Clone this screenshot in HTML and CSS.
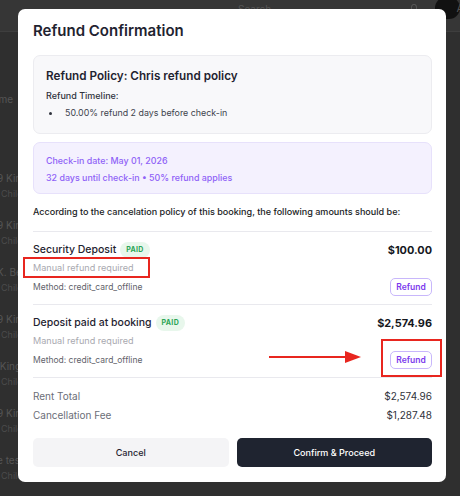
FILE: index.html
```html
<!DOCTYPE html>
<html>
<head>
<meta charset="utf-8">
<link rel="stylesheet" href="styles.css">
</head>
<body>
<div class="page">
  <div class="topbar">
    <span class="search">Search</span>
    <span class="topicon"></span>
    <span class="avatar"><span class="avatar-letter">A</span></span>
  </div>
  <div class="sidelist">
    <div class="side-home">Home</div>
    <div class="side-item"><div>9 King</div><div class="sub">Child</div></div>
    <div class="side-item"><div>9 King</div><div class="sub">Child</div></div>
    <div class="side-item"><div>K. Be</div><div class="sub">Child</div></div>
    <div class="side-item"><div>9 King</div><div class="sub">Child</div></div>
    <div class="side-item"><div>&nbsp;King</div><div class="sub">Child</div></div>
    <div class="side-item"><div>9 King</div><div class="sub">Child</div></div>
    <div class="side-item"><div>e tes</div><div class="sub">Child</div></div>
  </div>
</div>

<div class="modal">
  <h1 class="title">Refund Confirmation</h1>

  <div class="policy">
    <div class="policy-title">Refund Policy: Chris refund policy</div>
    <div class="policy-label">Refund Timeline:</div>
    <ul class="policy-list">
      <li>50.00% refund 2 days before check-in</li>
    </ul>
  </div>

  <div class="checkin">
    <div>Check-in date: May 01, 2026</div>
    <div>32 days until check-in • 50% refund applies</div>
  </div>

  <p class="intro">According to the cancelation policy of this booking, the following amounts should be:</p>

  <div class="item">
    <div class="item-left">
      <div class="item-title">Security Deposit <span class="badge">PAID</span></div>
      <div class="item-note">Manual refund required</div>
      <div class="item-method">Method: credit_card_offline</div>
    </div>
    <div class="item-right">
      <div class="amount">$100.00</div>
      <button class="refund-btn">Refund</button>
    </div>
  </div>

  <div class="item">
    <div class="item-left">
      <div class="item-title">Deposit paid at booking <span class="badge">PAID</span></div>
      <div class="item-note">Manual refund required</div>
      <div class="item-method">Method: credit_card_offline</div>
    </div>
    <div class="item-right">
      <div class="amount">$2,574.96</div>
      <button class="refund-btn">Refund</button>
    </div>
  </div>

  <div class="summary">
    <div class="sum-row"><span>Rent Total</span><span class="sum-val">$2,574.96</span></div>
    <div class="sum-row"><span>Cancellation Fee</span><span class="sum-val">$1,287.48</span></div>
  </div>

  <div class="actions">
    <button class="btn btn-cancel">Cancel</button>
    <button class="btn btn-confirm">Confirm &amp; Proceed</button>
  </div>
</div>

<div class="mark mark-note"></div>
<div class="mark mark-btn"></div>
<svg class="arrow" width="96" height="16" viewBox="0 0 96 16">
  <line x1="0" y1="8" x2="78" y2="8" stroke="#e8261f" stroke-width="2"/>
  <polygon points="76,2 92,8 76,14" fill="#e8261f"/>
</svg>
</body>
</html>
```

FILE: styles.css
```css
* { box-sizing: border-box; }
html, body {
  margin: 0;
  padding: 0;
}
body {
  width: 460px;
  height: 496px;
  overflow: hidden;
  background: #2f2f2f;
  font-family: "Inter", "Noto Sans", sans-serif;
  color: #1f2330;
  position: relative;
}

/* background page (dimmed) */
.page {
  width: 460px;
  height: 496px;
}
.topbar {
  height: 32px;
  background: #363636;
  border-bottom: 1px solid #3e3e3e;
  display: flex;
  align-items: flex-start;
  padding-left: 238px;
}
.search {
  font-size: 10px;
  color: #555;
  margin-top: 3px;
}
.topicon {
  width: 8px;
  height: 8px;
  border: 1px solid #555;
  border-radius: 50%;
  margin-left: 140px;
  margin-top: 4px;
}
.avatar {
  width: 44px;
  height: 22px;
  background: #111;
  border-radius: 11px;
  margin-left: 18px;
  margin-top: -3px;
  display: flex;
  justify-content: flex-end;
  align-items: center;
}
.avatar-letter {
  font-size: 11px;
  color: #555;
  margin-right: -4px;
}
.sidelist {
  margin-left: -3px;
  color: #555;
  font-size: 10px;
}
.side-home {
  margin-top: 61px;
  margin-left: -12px;
}
.side-item {
  margin-top: 66px;
  line-height: 15px;
}
.side-item + .side-item {
  margin-top: 17px;
}
.side-item .sub {
  font-size: 9px;
  padding-left: 4px;
  color: #4c4c4c;
}

/* modal */
.modal {
  position: absolute;
  left: 18px;
  top: 9px;
  width: 428px;
  height: 473px;
  background: #fff;
  border-radius: 7px;
  padding: 10px 14px 15px 15px;
  display: flex;
  flex-direction: column;
}
.title {
  margin: 0;
  font-size: 15px;
  line-height: 24px;
  font-weight: 600;
  color: #1f2330;
}

.policy {
  margin-top: 12px;
  background: #f8f8fa;
  border: 1px solid #ececf0;
  border-radius: 7px;
  padding: 10px 12px 12px 12px;
}
.policy-title {
  font-size: 11.7px;
  line-height: 20px;
  font-weight: 600;
  color: #1f2330;
}
.policy-label {
  margin-top: 2px;
  font-size: 9px;
  line-height: 16px;
  font-weight: 500;
  color: #30333d;
}
.policy-list {
  list-style: none;
  margin: 1px 0 0 0;
  padding: 0 0 0 19px;
  font-size: 8.9px;
  line-height: 16px;
  color: #40434d;
}
.policy-list li {
  position: relative;
}
.policy-list li::before {
  content: "";
  position: absolute;
  left: -16px;
  top: 7px;
  width: 3px;
  height: 3px;
  border-radius: 50%;
  background: #30333d;
}

.checkin {
  margin-top: 8px;
  background: #f4f1fe;
  border: 1px solid #e7e1fb;
  border-radius: 7px;
  padding: 10px 12px 7px 12px;
  display: flex;
  flex-direction: column;
  gap: 1px;
  font-size: 8.9px;
  line-height: 16px;
  font-weight: 500;
  color: #8f62f7;
}

.intro {
  margin: 10px 0 11px 0;
  font-size: 9.05px;
  line-height: 16px;
  font-weight: 500;
  color: #1a1c24;
}

.item {
  border-top: 1px solid #e9e9ee;
  padding: 9px 0 9px 0;
  display: flex;
  justify-content: space-between;
}
.item-left {
  display: flex;
  flex-direction: column;
}
.item-title {
  font-size: 10.5px;
  line-height: 18px;
  font-weight: 500;
  color: #1f2330;
  display: flex;
  align-items: center;
  gap: 4px;
}
.badge {
  background: #e8f7ec;
  color: #2ba556;
  font-size: 7px;
  font-weight: 700;
  letter-spacing: 0.3px;
  border-radius: 8px;
  padding: 0 6px;
  line-height: 16px;
  height: 16px;
}
.item-note {
  margin-top: 1px;
  font-size: 9.1px;
  line-height: 16px;
  color: #a9a9b0;
}
.item-method {
  margin-top: 3px;
  font-size: 8.5px;
  line-height: 16px;
  color: #5f626b;
}
.item-right {
  display: flex;
  flex-direction: column;
  align-items: flex-end;
  justify-content: space-between;
}
.amount {
  font-size: 10.9px;
  line-height: 18px;
  font-weight: 700;
  color: #15171d;
}
.refund-btn {
  font-family: inherit;
  font-size: 8.5px;
  font-weight: 600;
  color: #7c3aed;
  background: #fff;
  border: 1px solid #c8b7fb;
  border-radius: 5px;
  height: 18px;
  width: 42px;
  padding: 0;
  margin-bottom: -1px;
}

.summary {
  border-top: 1px solid #e9e9ee;
  padding-top: 9px;
  display: flex;
  flex-direction: column;
}
.sum-row {
  display: flex;
  justify-content: space-between;
  font-size: 10px;
  line-height: 19px;
  color: #6b6e77;
}
.sum-val {
  color: #30333b;
}

.actions {
  margin-top: 13px;
  display: grid;
  grid-template-columns: 1fr 1fr;
  gap: 8px;
}
.btn {
  font-family: inherit;
  height: 29px;
  border-radius: 5px;
  border: none;
  font-size: 9.05px;
  font-weight: 500;
}
.btn-cancel {
  background: #f4f4f6;
  color: #1f2330;
}
.btn-confirm {
  background: #1f2430;
  color: #fff;
}

/* annotations */
.mark {
  position: absolute;
  border: 2px solid #e8261f;
}
.mark-note {
  left: 23px;
  top: 257px;
  width: 127px;
  height: 21px;
}
.mark-btn {
  left: 381px;
  top: 339px;
  width: 61px;
  height: 38px;
}
.arrow {
  position: absolute;
  left: 269px;
  top: 349px;
}
```
